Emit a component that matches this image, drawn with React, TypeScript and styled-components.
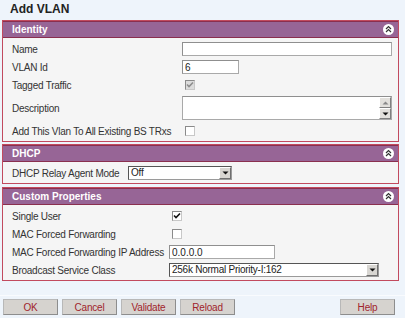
import * as React from "react";
import styled, { createGlobalStyle } from "styled-components";

const GlobalStyle = createGlobalStyle`
  body {
    margin: 0;
    background: #eef4fb;
    font-family: "Liberation Sans", Arial, sans-serif;
    font-size: 10px;
    letter-spacing: -0.25px;
    color: #333;
  }
`;

const SPage = styled.div`
  display: flex;
  flex-direction: column;
  height: 318px;
`;

const STitle = styled.h1`
  margin: 0;
  height: 20px;
  padding: 2px 0 0 10px;
  box-sizing: border-box;
  font-size: 12px;
  font-weight: bold;
  letter-spacing: 0;
  color: #222;
`;

const SPanel = styled.section<{ $gap: number }>`
  margin: ${(p) => p.$gap}px 6px 0 2px;
  border: 1px solid #c24a5e;
  background: #f5f5f5;
`;

const SPanelHeader = styled.header`
  display: flex;
  align-items: center;
  justify-content: space-between;
  height: 15px;
  padding: 0 4px 0 9px;
  background: #976596;
  border-top: 1px solid #8a2f4f;
  border-bottom: 1px solid #8a2f4f;
  color: #fff;
  font-weight: bold;
  letter-spacing: 0;
`;

const SPanelBody = styled.div<{ $labelWidth: number }>`
  display: grid;
  grid-template-columns: ${(p) => p.$labelWidth}px 1fr;
  grid-auto-rows: minmax(18px, auto);
  align-items: center;
  padding: 2px 6px 1px 9px;
`;

const SLabel = styled.span`
  white-space: nowrap;
`;

const SCell = styled.div`
  display: flex;
  align-items: center;
`;

const STextInput = styled.input<{ $width?: number }>`
  box-sizing: border-box;
  width: ${(p) => (p.$width ? `${p.$width}px` : "100%")};
  height: 14px;
  padding: 0 2px;
  border: 1px solid #a9a9a9;
  border-top-color: #8f8f8f;
  border-left-color: #8f8f8f;
  background: #fff;
  font: 10px "Liberation Sans", Arial, sans-serif;
  color: #222;
  outline: none;
`;

const STextArea = styled.div`
  display: flex;
  width: 100%;
  height: 24px;
  margin: 2px 0;
  box-sizing: border-box;
  border: 1px solid #a9a9a9;
  border-top-color: #8f8f8f;
  background: #fff;
`;

const SAreaText = styled.div`
  flex: 1;
`;

const SScrollCol = styled.div`
  display: flex;
  flex-direction: column;
  width: 12px;
`;

const SScrollBtn = styled.div`
  flex: 1;
  display: flex;
  align-items: center;
  justify-content: center;
  background: #e2e0dc;
  border: 1px solid #fff;
  border-right-color: #7f7f7f;
  border-bottom-color: #7f7f7f;
`;

const SSelect = styled.div<{ $width: number }>`
  display: flex;
  box-sizing: border-box;
  width: ${(p) => p.$width}px;
  height: 14px;
  border: 1px solid #9a9a9a;
  border-top-color: #555;
  border-left-color: #555;
  background: #fff;
`;

const SSelectValue = styled.span`
  flex: 1;
  padding-left: 2px;
  line-height: 12px;
  color: #222;
`;

const SDropBtn = styled.span`
  display: flex;
  align-items: center;
  justify-content: center;
  width: 12px;
  box-sizing: border-box;
  background: #d8d6d2;
  border: 1px solid #fff;
  border-right-color: #6f6f6f;
  border-bottom-color: #6f6f6f;
`;

const SCheck = styled.span<{ $disabled?: boolean }>`
  display: inline-flex;
  align-items: center;
  justify-content: center;
  width: 10px;
  height: 10px;
  margin-left: 3px;
  box-sizing: border-box;
  border: 1px solid #8a8a8a;
  border-right-color: #c8c8c8;
  border-bottom-color: #c8c8c8;
  background: ${(p) => (p.$disabled ? "#dcdcdc" : "#fff")};
`;

const SFooter = styled.div`
  display: flex;
  gap: 4px;
  margin-top: auto;
  padding: 3px 10px 3px 3px;
  border-top: 1px solid #f9fbfe;
`;

const SButton = styled.button<{ $push?: boolean }>`
  width: 55px;
  height: 16px;
  padding: 0;
  margin-left: ${(p) => (p.$push ? "auto" : "0")};
  background: #d6d3cf;
  border: 1px solid #8d8d8d;
  border-top-color: #b8b8b8;
  border-left-color: #b8b8b8;
  color: #a0242c;
  font: 10px "Liberation Sans", Arial, sans-serif;
  letter-spacing: -0.2px;
`;

const CollapseIcon = () => (
  <svg width="11" height="11" viewBox="0 0 11 11">
    <circle cx="5.5" cy="5.5" r="5.5" fill="#fff" />
    <path d="M3 5 L5.5 2.6 L8 5 M3 8 L5.5 5.6 L8 8" stroke="#333" strokeWidth="1.2" fill="none" />
  </svg>
);

const Tri = ({ up }: { up?: boolean }) => (
  <svg width="7" height="4" viewBox="0 0 7 4">
    <path d={up ? "M0.5 3.5 L3.5 0.5 L6.5 3.5 Z" : "M0.5 0.5 L6.5 0.5 L3.5 3.5 Z"} fill={up ? "#888" : "#111"} />
  </svg>
);

const Check = ({ checked, disabled }: { checked?: boolean; disabled?: boolean }) => (
  <SCheck $disabled={disabled}>
    {checked && (
      <svg width="8" height="8" viewBox="0 0 8 8">
        <path d="M1 3.5 L3 5.5 L7 1.5" stroke={disabled ? "#8e8e8e" : "#111"} strokeWidth="1.6" fill="none" />
      </svg>
    )}
  </SCheck>
);

const Select = ({ value, width }: { value: string; width: number }) => (
  <SSelect $width={width}>
    <SSelectValue>{value}</SSelectValue>
    <SDropBtn>
      <Tri />
    </SDropBtn>
  </SSelect>
);

const Panel = ({
  title,
  labelWidth,
  gap,
  children,
}: {
  title: string;
  labelWidth: number;
  gap: number;
  children: React.ReactNode;
}) => (
  <SPanel $gap={gap}>
    <SPanelHeader>
      <span>{title}</span>
      <CollapseIcon />
    </SPanelHeader>
    <SPanelBody $labelWidth={labelWidth}>{children}</SPanelBody>
  </SPanel>
);

export default function App() {
  return (
    <SPage>
      <GlobalStyle />
      <STitle>Add VLAN</STitle>

      <Panel title="Identity" labelWidth={170} gap={0}>
        <SLabel>Name</SLabel>
        <SCell>
          <STextInput defaultValue="" />
        </SCell>
        <SLabel>VLAN Id</SLabel>
        <SCell>
          <STextInput $width={57} defaultValue="6" />
        </SCell>
        <SLabel>Tagged Traffic</SLabel>
        <SCell>
          <Check checked disabled />
        </SCell>
        <SLabel>Description</SLabel>
        <SCell>
          <STextArea>
            <SAreaText />
            <SScrollCol>
              <SScrollBtn>
                <Tri up />
              </SScrollBtn>
              <SScrollBtn>
                <Tri />
              </SScrollBtn>
            </SScrollCol>
          </STextArea>
        </SCell>
        <SLabel>Add This Vlan To All Existing BS TRxs</SLabel>
        <SCell>
          <Check />
        </SCell>
      </Panel>

      <Panel title="DHCP" labelWidth={116} gap={2}>
        <SLabel>DHCP Relay Agent Mode</SLabel>
        <SCell>
          <Select value="Off" width={104} />
        </SCell>
      </Panel>

      <Panel title="Custom Properties" labelWidth={157} gap={3}>
        <SLabel>Single User</SLabel>
        <SCell>
          <Check checked />
        </SCell>
        <SLabel>MAC Forced Forwarding</SLabel>
        <SCell>
          <Check />
        </SCell>
        <SLabel>MAC Forced Forwarding IP Address</SLabel>
        <SCell>
          <STextInput $width={106} defaultValue="0.0.0.0" />
        </SCell>
        <SLabel>Broadcast Service Class</SLabel>
        <SCell>
          <Select value="256k Normal Priority-I:162" width={210} />
        </SCell>
      </Panel>

      <SFooter>
        <SButton>OK</SButton>
        <SButton>Cancel</SButton>
        <SButton>Validate</SButton>
        <SButton>Reload</SButton>
        <SButton $push>Help</SButton>
      </SFooter>
    </SPage>
  );
}
